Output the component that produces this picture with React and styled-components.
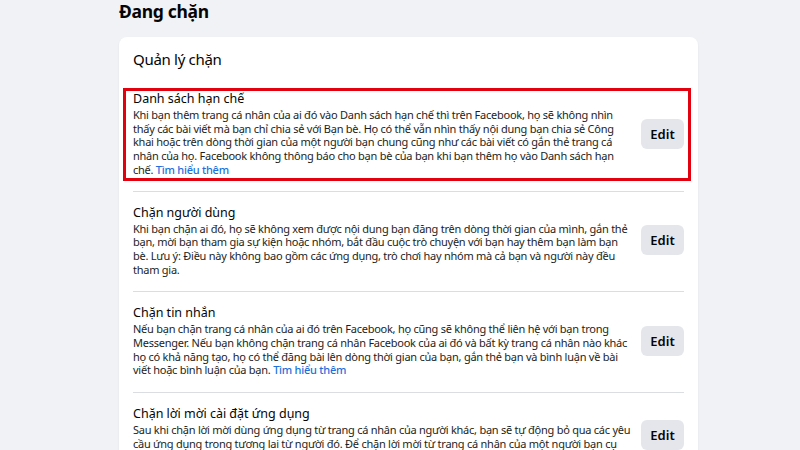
import styled, { createGlobalStyle } from "styled-components";

const GlobalStyle = createGlobalStyle`
  html, body {
    margin: 0;
    padding: 0;
    background: #f0f2f5;
    font-family: "Noto Sans", "Open Sans", sans-serif;
    color: #1c1e21;
  }
`;

const Page = styled.div`
  width: 800px;
  height: 450px;
  overflow: hidden;
  padding-left: 119px;
  box-sizing: border-box;
`;

const PageTitle = styled.h1`
  margin: 0;
  font-size: 17.5px;
  line-height: 22px;
  font-weight: 700;
  letter-spacing: -0.3px;
  color: #050505;
  height: 37px;
`;

const Card = styled.div`
  width: 579px;
  background: #fff;
  border-radius: 8px;
  box-shadow: 0 1px 2px rgba(0, 0, 0, 0.08);
  padding: 12px 14px 0 14px;
  box-sizing: border-box;
`;

const CardTitle = styled.h2`
  margin: 0 0 19px;
  font-size: 15px;
  line-height: 20px;
  font-weight: 400;
  letter-spacing: -0.3px;
  color: #050505;
`;

const Section = styled.div`
  display: flex;
  align-items: center;
  gap: 13px;
  padding: ${ props => props.highlighted ? '0 4px 1px 7px' : '13px 0 15px' };
  margin: ${ props => props.highlighted ? '0 -7px 10px -10px' : '0' };
  border: ${ props => props.highlighted ? '3px solid #e3000f' : 'none' };

  & + & {
    border-top: 1px solid #dadde1;
  }
`;

const Text = styled.div`
  flex: 1;
  min-width: 0;
`;

const SectionTitle = styled.div`
  font-size: 12.5px;
  line-height: 16px;
  font-weight: 400;
  color: #050505;
`;

const Description = styled.p`
  margin: 1px 0 0;
  font-size: 11px;
  line-height: 13.7px;
  letter-spacing: -0.25px;
  color: #1c1e21;
  white-space: nowrap;
`;

const Line = styled.span`
  display: block;
`;

const Link = styled.a`
  color: #216fdb;
  text-decoration: none;
  font-weight: 500;
`;

const EditButton = styled.button`
  flex: none;
  width: 43px;
  height: 30px;
  border: none;
  border-radius: 6px;
  background: #e4e6eb;
  color: #050505;
  font-family: inherit;
  font-size: 13px;
  font-weight: 600;
  padding: 0;
`;

const sections = [
  {
    title: "Danh sách hạn chế",
    lines: [
      "Khi bạn thêm trang cá nhân của ai đó vào Danh sách hạn chế thì trên Facebook, họ sẽ không nhìn",
      "thấy các bài viết mà bạn chỉ chia sẻ với Bạn bè. Họ có thể vẫn nhìn thấy nội dung bạn chia sẻ Công",
      "khai hoặc trên dòng thời gian của một người bạn chung cũng như các bài viết có gắn thẻ trang cá",
      "nhân của họ. Facebook không thông báo cho bạn bè của bạn khi bạn thêm họ vào Danh sách hạn",
      "chế.",
    ],
    link: true,
    highlighted: true,
  },
  {
    title: "Chặn người dùng",
    lines: [
      "Khi bạn chặn ai đó, họ sẽ không xem được nội dung bạn đăng trên dòng thời gian của mình, gắn thẻ",
      "bạn, mời bạn tham gia sự kiện hoặc nhóm, bắt đầu cuộc trò chuyện với bạn hay thêm bạn làm bạn",
      "bè. Lưu ý: Điều này không bao gồm các ứng dụng, trò chơi hay nhóm mà cả bạn và người này đều",
      "tham gia.",
    ],
  },
  {
    title: "Chặn tin nhắn",
    lines: [
      "Nếu bạn chặn trang cá nhân của ai đó trên Facebook, họ cũng sẽ không thể liên hệ với bạn trong",
      "Messenger. Nếu bạn không chặn trang cá nhân Facebook của ai đó và bất kỳ trang cá nhân nào khác",
      "họ có khả năng tạo, họ có thể đăng bài lên dòng thời gian của bạn, gắn thẻ bạn và bình luận về bài",
      "viết hoặc bình luận của bạn.",
    ],
    link: true,
  },
  {
    title: "Chặn lời mời cài đặt ứng dụng",
    lines: [
      "Sau khi chặn lời mời dùng ứng dụng từ trang cá nhân của người khác, bạn sẽ tự động bỏ qua các yêu",
      "cầu ứng dụng trong tương lai từ người đó. Để chặn lời mời từ trang cá nhân của một người bạn cụ",
      "thể, hãy nhấp vào liên kết \"Chặn lời mời từ\" bên dưới.",
    ],
  },
];

export default function App() {
  return (
    <Page>
      <GlobalStyle />
      <PageTitle>Đang chặn</PageTitle>
      <Card>
        <CardTitle>Quản lý chặn</CardTitle>
        {
          sections.map(
            (s, idx) => (
              <Section key={idx} highlighted={s.highlighted}>
                <Text>
                  <SectionTitle>{s.title}</SectionTitle>
                  <Description>
                    {
                      s.lines.map(
                        (line, i) => (
                          <Line key={i}>
                            {line}
                            {s.link && i === s.lines.length - 1 && <> <Link href="#">Tìm hiểu thêm</Link></>}
                          </Line>
                        )
                      )
                    }
                  </Description>
                </Text>
                <EditButton>Edit</EditButton>
              </Section>
            )
          )
        }
      </Card>
    </Page>
  );
}
